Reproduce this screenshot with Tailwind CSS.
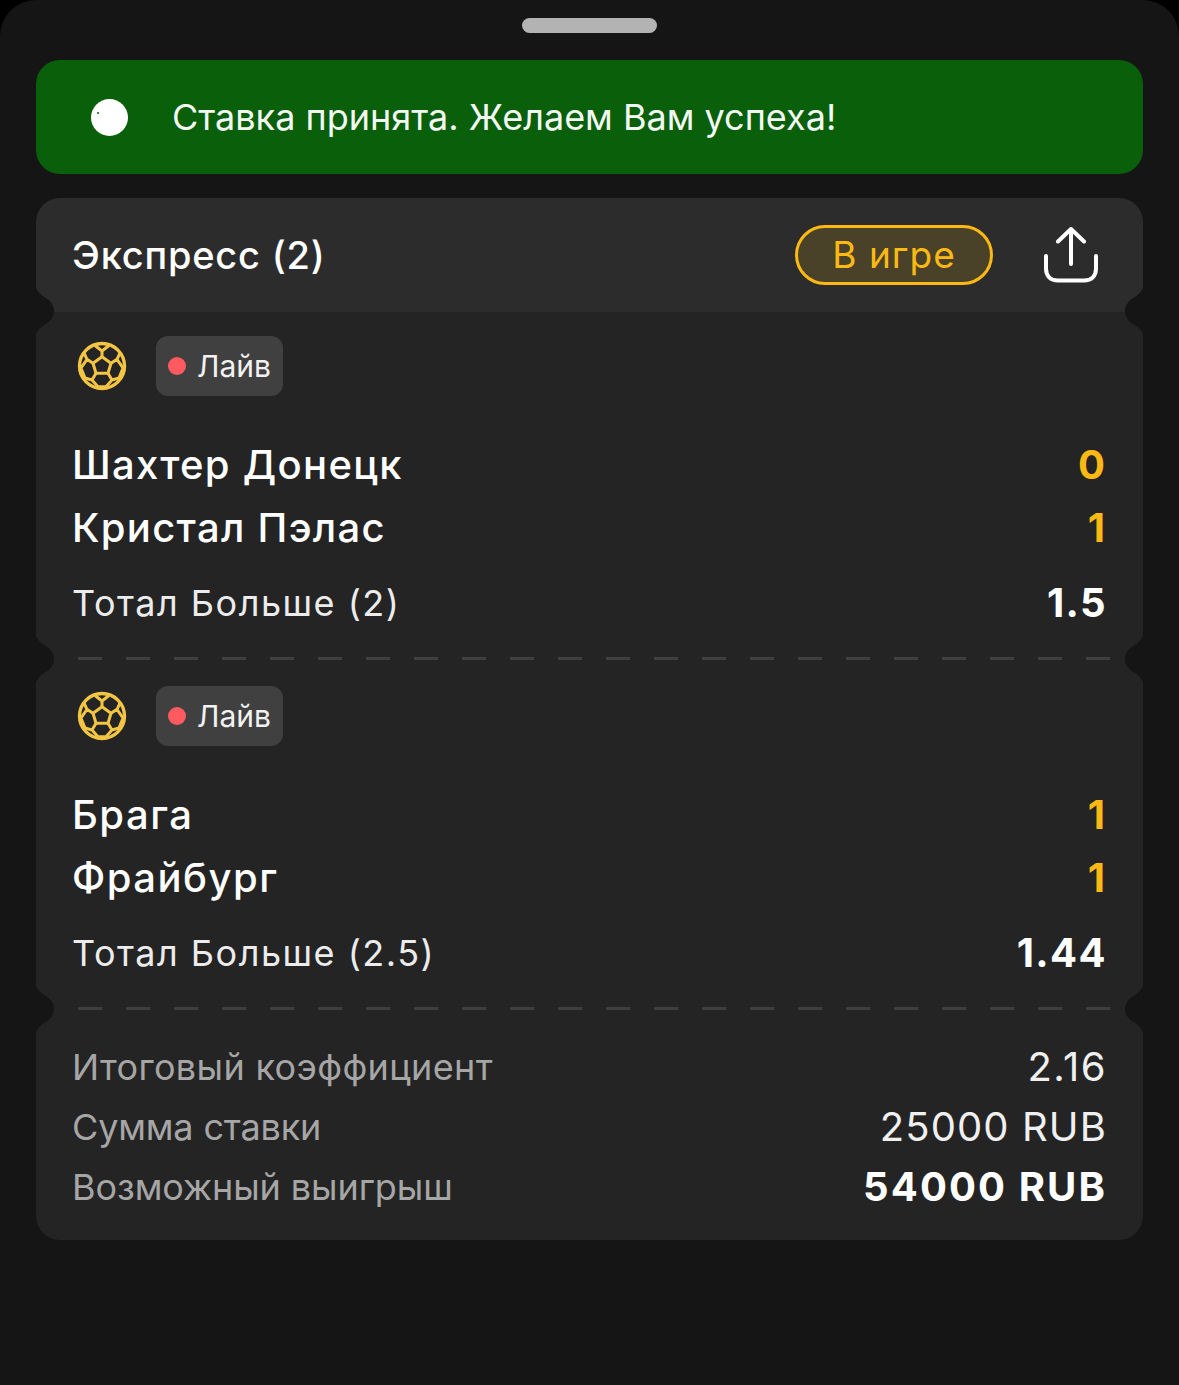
<!DOCTYPE html>
<html lang="ru"><head><meta charset="utf-8">
<script src="https://cdn.jsdelivr.net/npm/@tailwindcss/browser@4"></script>
</head>
<body class="bg-black font-['Inter',sans-serif] text-white">
<div class="w-[1179px] h-[1385px] bg-[#151515] rounded-t-[36px] overflow-hidden px-[36px] relative">
  <div class="h-[60px] flex justify-center pt-[18px]"><div class="w-[135px] h-[15px] rounded-full bg-[#b3b3b3]"></div></div>
  <div class="h-[114px] rounded-[24px] bg-[#095f0a] flex items-center pl-[55px]">
    <div class="relative w-[37px] h-[37px] rounded-full bg-white"><span class="absolute left-[6px] top-[13px] w-[2px] h-[2px] rounded-full bg-[#095f0a]"></span></div>
    <span class="ml-[44px] text-[36px] text-[#f4f8f4]">Ставка принята. Желаем Вам успеха!</span>
  </div>
  <div class="mt-[24px] w-[1107px] h-[1042px] flex flex-col relative">
    <div class="h-[114px] shrink-0 bg-[#2c2c2c] rounded-t-[24px] flex items-center pl-[36px] pr-[45px]">
      <span class="text-[38px] font-medium tracking-[0.8px]">Экспресс (2)</span>
      <div class="ml-auto mr-[1px] w-[198px] h-[60px] rounded-full border-[3px] border-[#fdb913] bg-[#4a4129] flex items-center justify-center text-[37px] tracking-[1px] text-[#fdb913]">В игре</div>
      <svg class="ml-[50px]" width="54" height="58" viewBox="0 0 54 58" fill="none" stroke="#fff" stroke-width="4" stroke-linecap="round" stroke-linejoin="round"><path d="M27 38V3M14 15.500 27 3l13 12.500"/><path d="M2 30v12.500C2 50 6.500 54.500 14 54.500h26c7.500 0 12-4.500 12-12V30"/></svg>
    </div>
    <div class="h-[348px] shrink-0 bg-[#242424] pt-[24px] pl-[36px] pr-[38px] relative">
      <div class="flex items-center h-[60px]">
        <svg class="ml-[5px]" width="50" height="50" viewBox="0 0 50 50" fill="none" stroke="#f3c544" stroke-width="3" stroke-linejoin="round"><circle cx="25" cy="25" r="22.500" stroke-width="3.400"/><path d="M25 15.700 34 22.300 31 32.300H19L16 22.300Z"/><path d="M25 15.700V10L18 4.500M25 10 32 4.500M34 22.300 40 18.300 43.500 11M40 18.300 46 27 42 37 35 39 31 32.300M35 39 29 45.700H21L15 39 19 32.300M15 39 8 37 4 27 10 18.300 16 22.300M10 18.300 6.500 11"/></svg>
        <div class="ml-[29px] h-[60px] w-[127px] rounded-[12px] bg-[#404040] flex items-center pl-[12px] text-[30px]"><span class="w-[18px] h-[18px] rounded-full bg-[#ff5a5f]"></span><span class="ml-[11px] text-[#f2f2f2]">Лайв</span></div>
      </div>
      <div class="mt-[37px] h-[63px] flex items-center justify-between text-[40px] font-medium tracking-[1.300px]"><span>Шахтер Донецк</span><span class="text-[#fdb913] font-bold tracking-normal">0</span></div>
      <div class="h-[63px] flex items-center justify-between text-[40px] font-medium tracking-[1.300px]"><span>Кристал Пэлас</span><span class="text-[#fdb913] font-bold tracking-normal">1</span></div>
      <div class="mt-[12px] h-[63px] flex items-center justify-between"><span class="text-[36px] tracking-[1.500px] text-[#ececec]">Тотал Больше (2)</span><span class="-mr-[2px] text-[40px] font-bold tracking-[1.400px]">1.5</span></div>
      <div class="absolute left-[42px] bottom-0 w-[1032px] h-[3px] bg-[repeating-linear-gradient(90deg,#3f3f3f_0_24px,transparent_24px_48px)]"></div>
    </div>
    <div class="h-[350px] shrink-0 bg-[#242424] pt-[26px] pl-[36px] pr-[38px] relative">
      <div class="flex items-center h-[60px]">
        <svg class="ml-[5px]" width="50" height="50" viewBox="0 0 50 50" fill="none" stroke="#f3c544" stroke-width="3" stroke-linejoin="round"><circle cx="25" cy="25" r="22.500" stroke-width="3.400"/><path d="M25 15.700 34 22.300 31 32.300H19L16 22.300Z"/><path d="M25 15.700V10L18 4.500M25 10 32 4.500M34 22.300 40 18.300 43.500 11M40 18.300 46 27 42 37 35 39 31 32.300M35 39 29 45.700H21L15 39 19 32.300M15 39 8 37 4 27 10 18.300 16 22.300M10 18.300 6.500 11"/></svg>
        <div class="ml-[29px] h-[60px] w-[127px] rounded-[12px] bg-[#404040] flex items-center pl-[12px] text-[30px]"><span class="w-[18px] h-[18px] rounded-full bg-[#ff5a5f]"></span><span class="ml-[11px] text-[#f2f2f2]">Лайв</span></div>
      </div>
      <div class="mt-[37px] h-[63px] flex items-center justify-between text-[40px] font-medium tracking-[1.500px]"><span>Брага</span><span class="text-[#fdb913] font-bold tracking-normal">1</span></div>
      <div class="h-[63px] flex items-center justify-between text-[40px] font-medium tracking-[1.500px]"><span>Фрайбург</span><span class="text-[#fdb913] font-bold tracking-normal">1</span></div>
      <div class="mt-[12px] h-[63px] flex items-center justify-between"><span class="text-[36px] tracking-[1.500px] text-[#ececec]">Тотал Больше (2.5)</span><span class="-mr-[2px] text-[40px] font-bold tracking-[1.400px]">1.44</span></div>
      <div class="absolute left-[42px] bottom-0 w-[1032px] h-[3px] bg-[repeating-linear-gradient(90deg,#3f3f3f_0_24px,transparent_24px_48px)]"></div>
    </div>
    <div class="h-[230px] shrink-0 bg-[#242424] rounded-b-[24px] pt-[27px] pl-[36px] pr-[38px]">
      <div class="h-[60px] flex items-center justify-between"><span class="text-[36px] tracking-[0.350px] text-[#a6a6a6]">Итоговый коэффициент</span><span class="-mr-[2px] text-[40px] tracking-[1.500px] text-[#f0f0f0]">2.16</span></div>
      <div class="h-[60px] flex items-center justify-between"><span class="text-[36px] tracking-[-0.150px] text-[#a6a6a6]">Сумма ставки</span><span class="-mr-[2px] text-[40px] tracking-[1.100px] text-[#f0f0f0]">25000 RUB</span></div>
      <div class="h-[60px] flex items-center justify-between"><span class="text-[36px] tracking-[-0.100px] text-[#a6a6a6]">Возможный выигрыш</span><span class="-mr-[2px] text-[40px] font-bold tracking-[2.100px]">54000 RUB</span></div>
    </div>
    <svg class="absolute left-0 top-[90px]" width="18" height="46" viewBox="0 0 18 46" fill="#151515"><path d="M0 0Q3 6 8 9C14 12 18 17 18 23C18 29 14 34 8 37Q3 40 0 46Z"/></svg>
    <svg class="absolute right-0 top-[90px] -scale-x-100" width="18" height="46" viewBox="0 0 18 46" fill="#151515"><path d="M0 0Q3 6 8 9C14 12 18 17 18 23C18 29 14 34 8 37Q3 40 0 46Z"/></svg>
    <svg class="absolute left-0 top-[438px]" width="18" height="46" viewBox="0 0 18 46" fill="#151515"><path d="M0 0Q3 6 8 9C14 12 18 17 18 23C18 29 14 34 8 37Q3 40 0 46Z"/></svg>
    <svg class="absolute right-0 top-[438px] -scale-x-100" width="18" height="46" viewBox="0 0 18 46" fill="#151515"><path d="M0 0Q3 6 8 9C14 12 18 17 18 23C18 29 14 34 8 37Q3 40 0 46Z"/></svg>
    <svg class="absolute left-0 top-[788px]" width="18" height="46" viewBox="0 0 18 46" fill="#151515"><path d="M0 0Q3 6 8 9C14 12 18 17 18 23C18 29 14 34 8 37Q3 40 0 46Z"/></svg>
    <svg class="absolute right-0 top-[788px] -scale-x-100" width="18" height="46" viewBox="0 0 18 46" fill="#151515"><path d="M0 0Q3 6 8 9C14 12 18 17 18 23C18 29 14 34 8 37Q3 40 0 46Z"/></svg>
  </div>
</div>
</body></html>
